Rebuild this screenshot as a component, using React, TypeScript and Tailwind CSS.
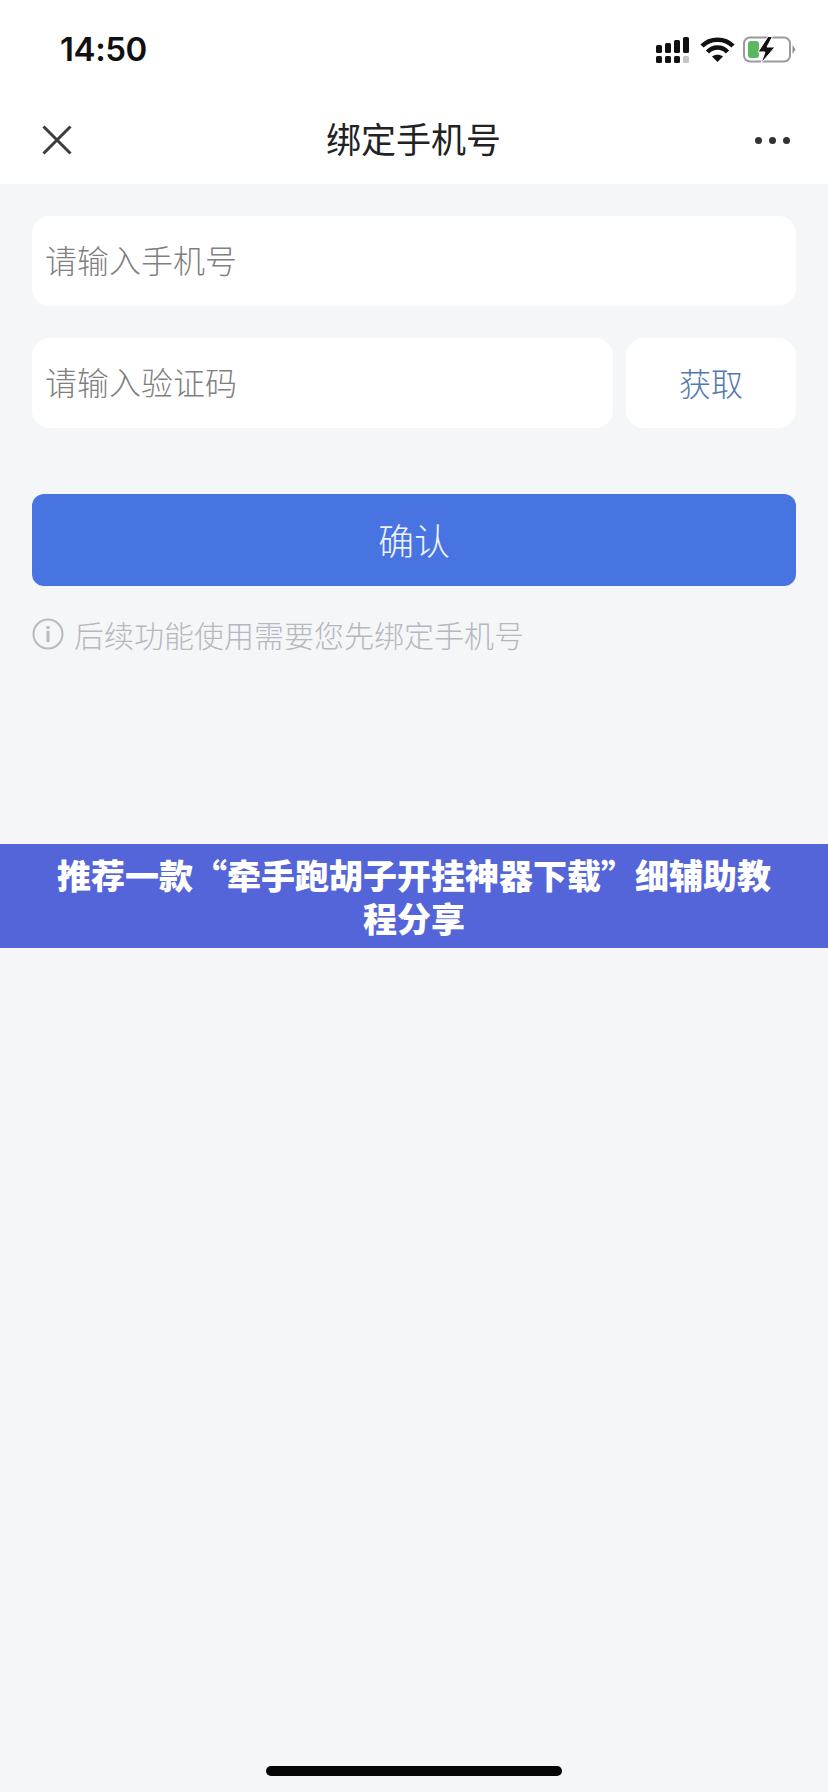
const cjk = "font-['Noto_Sans_CJK_SC','Noto_Sans',sans-serif]";

function StatusIcons() {
  return (
    <svg width="140" height="28" viewBox="0 0 140 28" className="block">
      {/* signal: two rows of bars */}
      <g fill="#111">
        <rect x="0" y="9" width="6" height="8" rx="1.5" />
        <rect x="9" y="7" width="6" height="10" rx="1.5" />
        <rect x="18" y="4" width="6" height="13" rx="1.5" />
        <rect x="27" y="1" width="6" height="16" rx="1.5" />
        <rect x="0" y="20" width="6" height="7" rx="1.5" />
        <rect x="9" y="20" width="6" height="7" rx="1.5" />
        <rect x="18" y="20" width="6" height="7" rx="1.5" />
      </g>
      <rect x="27" y="20" width="6" height="7" rx="1.5" fill="#c4c4c4" />
      {/* wifi */}
      <path d="M46 10C54 1.5 69 1.5 77 10" fill="none" stroke="#111" strokeWidth="4.5" />
      <path d="M51.5 16C57 10 66 10 71.5 16" fill="none" stroke="#111" strokeWidth="4.5" />
      <path d="M56 20.5C59 18 64 18 67 20.5L61.5 26Z" fill="#111" />
      {/* battery */}
      <rect x="88" y="1.5" width="46" height="24" rx="6" fill="none" stroke="#9a9a9a" strokeWidth="2" />
      <rect x="92" y="5" width="11" height="17" rx="3" fill="#5cb85f" />
      <path d="M136.5 9L139.5 13.5L136.5 18Z" fill="#8f8f8f" />
      <path d="M112 0.5L102 16H109L105 27.5L119 11H111L116.5 0.5Z" fill="#111" stroke="#fff" strokeWidth="1" />
    </svg>
  );
}

function FieldBox({ placeholder, className }: { placeholder: string; className: string }) {
  return (
    <input
      readOnly
      placeholder={placeholder}
      className={`h-[90px] rounded-[18px] bg-white pb-[4px] pl-[13px] text-[32px] font-light outline-none placeholder:text-[#7f7f7f] ${cjk} ${className}`}
    />
  );
}

export default function App() {
  return (
    <div className={`flex min-h-[1792px] w-[828px] flex-col bg-[#f4f6f8] ${cjk}`}>
      <div className="bg-white">
        <div className="flex h-[96px] items-center justify-between pl-[60px] pr-[32px] pt-[4px]">
          <span className="font-['Inter',sans-serif] text-[33px] font-semibold tracking-[-0.4px] text-[#111]">
            14:50
          </span>
          <StatusIcons />
        </div>
        <div className="flex h-[88px] items-center justify-between pl-[42px] pr-[38px]">
          <svg width="30" height="30" viewBox="0 0 30 30">
            <path d="M1.5 1.5L28.5 28.5M28.5 1.5L1.5 28.5" stroke="#3c3c3c" strokeWidth="3" fill="none" />
          </svg>
          <h1 className="pb-[4px] text-[35px] font-normal text-[#222]">绑定手机号</h1>
          <div className="flex gap-[7px]">
            <span className="size-[7px] rounded-full bg-[#333]" />
            <span className="size-[7px] rounded-full bg-[#333]" />
            <span className="size-[7px] rounded-full bg-[#333]" />
          </div>
        </div>
      </div>

      <div className="flex flex-col px-[32px] pt-[32px]">
        <FieldBox placeholder="请输入手机号" className="w-full" />
        <div className="mt-[32px] flex gap-[13px]">
          <FieldBox placeholder="请输入验证码" className="min-w-0 flex-1" />
          <button className="h-[90px] w-[170px] rounded-[18px] bg-white pb-[2px] text-[32px] font-light text-[#5279ad]">
            获取
          </button>
        </div>
        <button className="mt-[66px] h-[92px] rounded-[12px] bg-[#4874e2] pb-[2px] text-[36px] font-light text-[#eef3fb]">
          确认
        </button>
        <div className="mt-[31px] flex h-[34px] items-center gap-[10px]">
          <svg width="32" height="32" viewBox="0 0 32 32">
            <circle cx="16" cy="16" r="14.5" fill="none" stroke="#b5b9c0" strokeWidth="2" />
            <rect x="14.5" y="13" width="3" height="11" fill="#b5b9c0" />
            <rect x="14.5" y="8" width="3" height="3" fill="#b5b9c0" />
          </svg>
          <p className="text-[30px] font-light leading-none text-[#b4b8bf]">后续功能使用需要您先绑定手机号</p>
        </div>
      </div>

      <div className="mt-[193px] bg-[#5465d9] px-[50px] py-[9px] text-center text-[34px] font-black leading-[43px] text-white">
        推荐一款“牵手跑胡子开挂神器下载”细辅助教程分享
      </div>

      <div className="flex flex-1 items-end justify-center pb-[16px]">
        <div className="h-[10px] w-[296px] rounded-full bg-[#050505]" />
      </div>
    </div>
  );
}
